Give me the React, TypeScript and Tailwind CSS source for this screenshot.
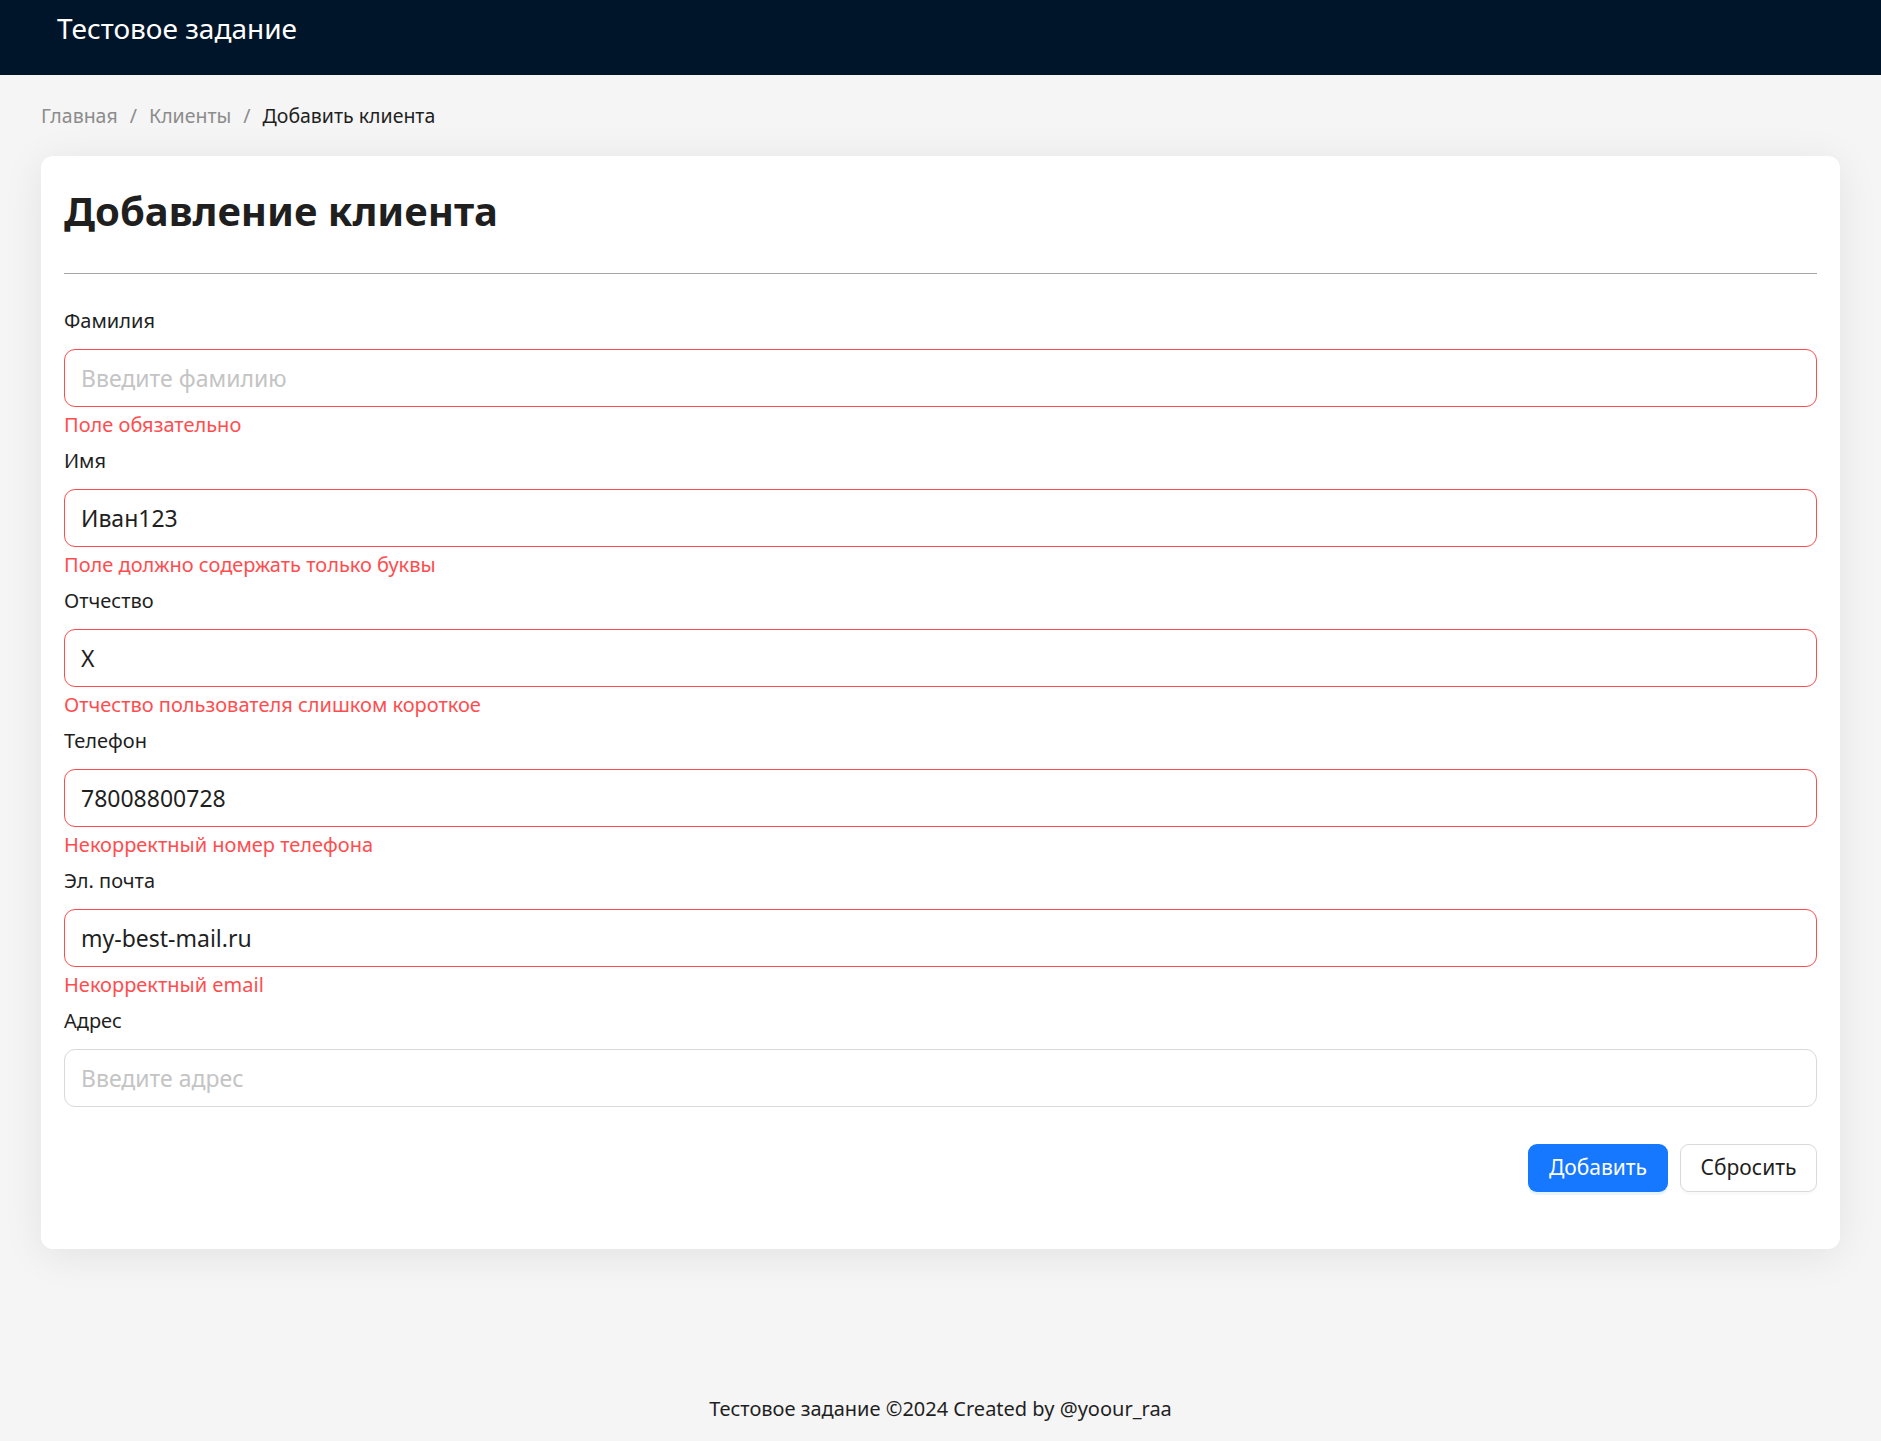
import { useState } from 'react';

type Field = {
    name: string;
    label: string;
    placeholder: string;
    value: string;
    error?: string;
};

const initialFields: Field[] = [
    { name: 'lastName', label: 'Фамилия', placeholder: 'Введите фамилию', value: '', error: 'Поле обязательно' },
    { name: 'firstName', label: 'Имя', placeholder: 'Введите имя', value: 'Иван123', error: 'Поле должно содержать только буквы' },
    { name: 'middleName', label: 'Отчество', placeholder: 'Введите отчество', value: 'Х', error: 'Отчество пользователя слишком короткое' },
    { name: 'phone', label: 'Телефон', placeholder: 'Введите телефон', value: '78008800728', error: 'Некорректный номер телефона' },
    { name: 'email', label: 'Эл. почта', placeholder: 'Введите эл. почту', value: 'my-best-mail.ru', error: 'Некорректный email' },
    { name: 'address', label: 'Адрес', placeholder: 'Введите адрес', value: '' },
];

function FormField({ field, onChange }: { field: Field; onChange: (v: string) => void }) {
    const hasError = Boolean(field.error);
    return (
        <div className={hasError ? 'pb-[4px]' : ''}>
            <label htmlFor={field.name} className="block text-[20px] leading-[32px] pb-[12px] text-[#1f1f1f]">
                {field.label}
            </label>
            <input
                id={field.name}
                value={field.value}
                onChange={(e) => onChange(e.target.value)}
                placeholder={field.placeholder}
                className={`block w-full h-[58px] rounded-[11px] border bg-white px-[16px] text-[23px] text-[#1f1f1f] outline-none placeholder:text-[#c4c4c4] ${
                    hasError ? 'border-[#ff4d4f]' : 'border-[#d9d9d9]'
                }`}
            />
            {hasError && (
                <div className="mt-[2px] text-[20px] leading-[32px] text-[#ff4d4f]">{field.error}</div>
            )}
        </div>
    );
}

export default function App() {
    const [fields, setFields] = useState<Field[]>(initialFields);

    const update = (idx: number, value: string) => {
        setFields((prev) => prev.map((f, i) => (i === idx ? { ...f, value } : f)));
    };

    const reset = () => setFields(initialFields.map((f) => ({ ...f, value: '' })));

    return (
        <div className="min-h-screen flex flex-col bg-[#f5f5f5] font-['Noto_Sans',sans-serif]">
            <header className="h-[75px] bg-[#001529] px-[57px] pt-[8px]">
                <div className="text-[28px] leading-[40px] text-white">Тестовое задание</div>
            </header>

            <main className="flex-1 px-[41px]">
                <nav className="flex items-center pt-[25px] pb-[24px] text-[19.5px] leading-[32px]">
                    <a href="#" className="text-[#8c8c8c]">Главная</a>
                    <span className="mx-[12px] text-[#8c8c8c]">/</span>
                    <a href="#" className="text-[#8c8c8c]">Клиенты</a>
                    <span className="mx-[12px] text-[#8c8c8c]">/</span>
                    <span className="text-[#1f1f1f]">Добавить клиента</span>
                </nav>

                <section className="rounded-[12px] bg-white px-[23px] pt-[30px] pb-[57px] shadow-[0_6px_40px_rgba(0,0,0,0.08)]">
                    <h2 className="text-[40px] leading-[50px] font-bold text-[#1f1f1f]">Добавление клиента</h2>
                    <div className="mt-[37px] mb-[31px] h-px bg-[#a6a6a6]" />

                    <form onSubmit={(e) => e.preventDefault()}>
                        {fields.map((f, i) => (
                            <FormField key={f.name} field={f} onChange={(v) => update(i, v)} />
                        ))}

                        <div className="mt-[37px] flex justify-end gap-[12px]">
                            <button
                                type="submit"
                                className="h-[48px] w-[140px] rounded-[9px] bg-[#1677ff] text-[21px] text-white shadow-[0_3px_0_rgba(5,145,255,0.1)]"
                            >
                                Добавить
                            </button>
                            <button
                                type="button"
                                onClick={reset}
                                className="h-[48px] w-[137px] rounded-[9px] border border-[#d9d9d9] bg-white text-[21px] text-[#1f1f1f] shadow-[0_3px_0_rgba(0,0,0,0.02)]"
                            >
                                Сбросить
                            </button>
                        </div>
                    </form>
                </section>
            </main>

            <footer className="pt-[16px] pb-[16px] text-center text-[20px] leading-[32px] text-[#1f1f1f]">
                Тестовое задание ©2024 Created by @yoour_raa
            </footer>
        </div>
    );
}
